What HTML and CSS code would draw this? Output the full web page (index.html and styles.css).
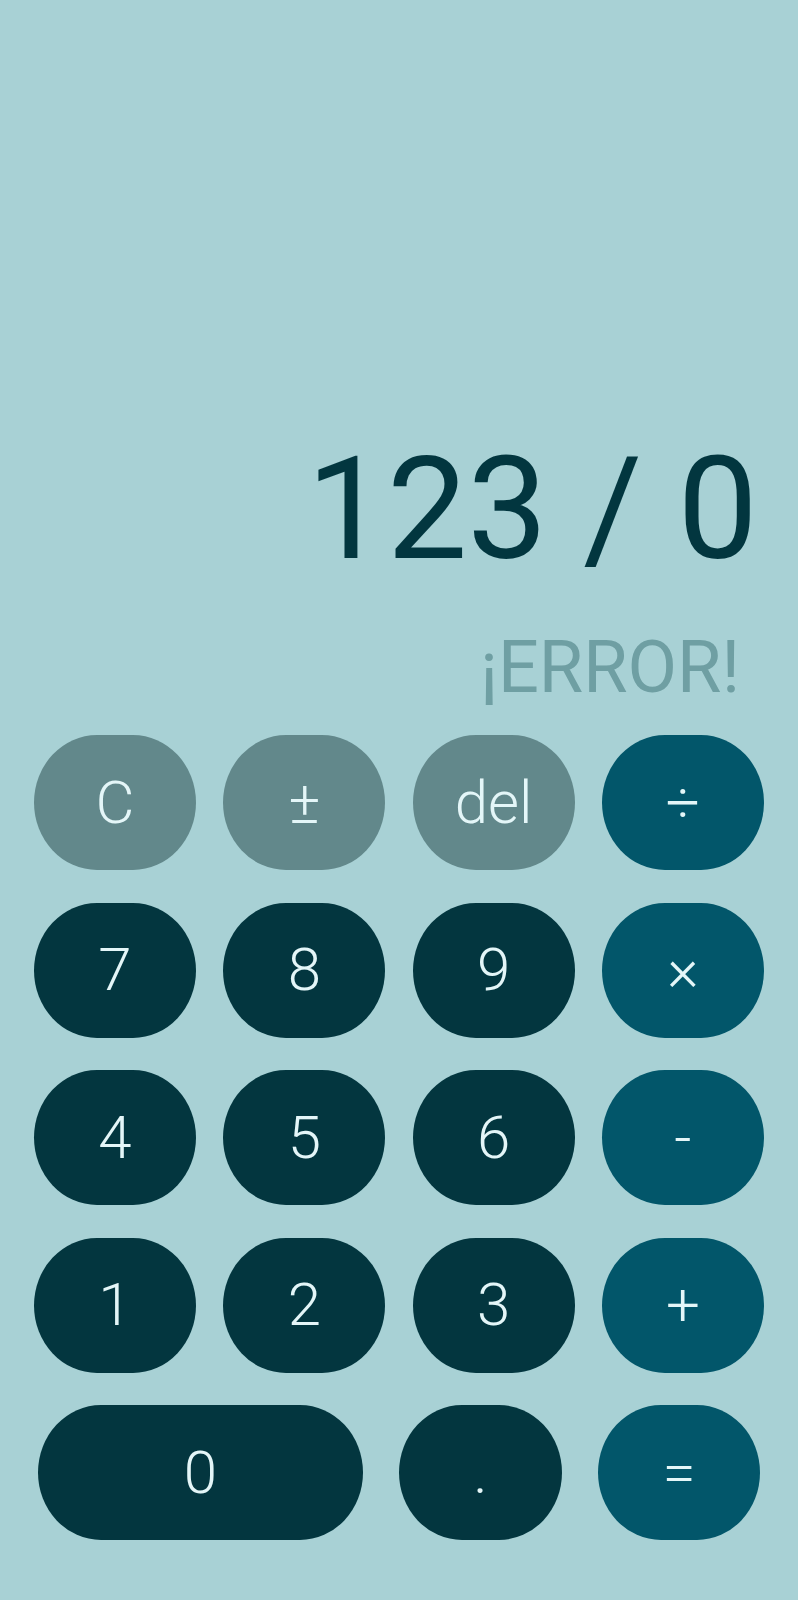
FILE: index.html
```html
<!DOCTYPE html>
<html lang="es">
<head>
<meta charset="utf-8">
<title>Calculadora</title>
<link rel="stylesheet" href="styles.css">
</head>
<body>
<main class="calc">
  <section class="display">
    <div class="expr">123 / 0</div>
    <div class="result">¡ERROR!</div>
  </section>
  <section class="keypad">
    <button class="key fn">C</button>
    <button class="key fn">±</button>
    <button class="key fn">del</button>
    <button class="key op">÷</button>
    <button class="key num">7</button>
    <button class="key num">8</button>
    <button class="key num">9</button>
    <button class="key op">×</button>
    <button class="key num">4</button>
    <button class="key num">5</button>
    <button class="key num">6</button>
    <button class="key op">-</button>
    <button class="key num">1</button>
    <button class="key num">2</button>
    <button class="key num">3</button>
    <button class="key op">+</button>
  </section>
  <section class="lastrow">
    <button class="key num wide">0</button>
    <button class="key num dot">.</button>
    <button class="key op eq">=</button>
  </section>
</main>
</body>
</html>
```
FILE: styles.css
```css
html, body {
  margin: 0;
  padding: 0;
  background: #a8d1d5;
}
.calc {
  width: 798px;
  height: 1600px;
  display: flex;
  flex-direction: column;
  font-family: Roboto, "Noto Sans", sans-serif;
}
.display {
  display: flex;
  flex-direction: column;
  align-items: flex-end;
  padding-top: 438px;
}
.expr {
  font-size: 143px;
  line-height: 143px;
  font-weight: 400;
  color: #02363f;
  padding-right: 40px;
}
.result {
  margin-top: 50.5px;
  font-size: 72px;
  line-height: 72px;
  font-weight: 400;
  color: #6f9fa3;
  padding-right: 58px;
}
.keypad {
  margin-top: 31.6px;
  padding-left: 34px;
  display: grid;
  grid-template-columns: repeat(4, 162px);
  grid-auto-rows: 135px;
  column-gap: 27.3px;
  row-gap: 32.5px;
}
.lastrow {
  margin-top: 32.5px;
  padding-left: 38px;
  display: flex;
  gap: 36px;
}
.key {
  border: none;
  margin: 0;
  padding: 0;
  height: 135px;
  border-radius: 63px / 67.5px;
  font-family: Roboto, "Noto Sans", sans-serif;
  font-weight: 300;
  font-size: 60px;
  line-height: 1;
  color: #e4f6f8;
  display: flex;
  align-items: center;
  justify-content: center;
}
.fn { background: #62888b; }
.num { background: #03363f; }
.op { background: #02566a; }
.wide { width: 325px; }
.dot { width: 163px; }
.eq { width: 162px; }
```
